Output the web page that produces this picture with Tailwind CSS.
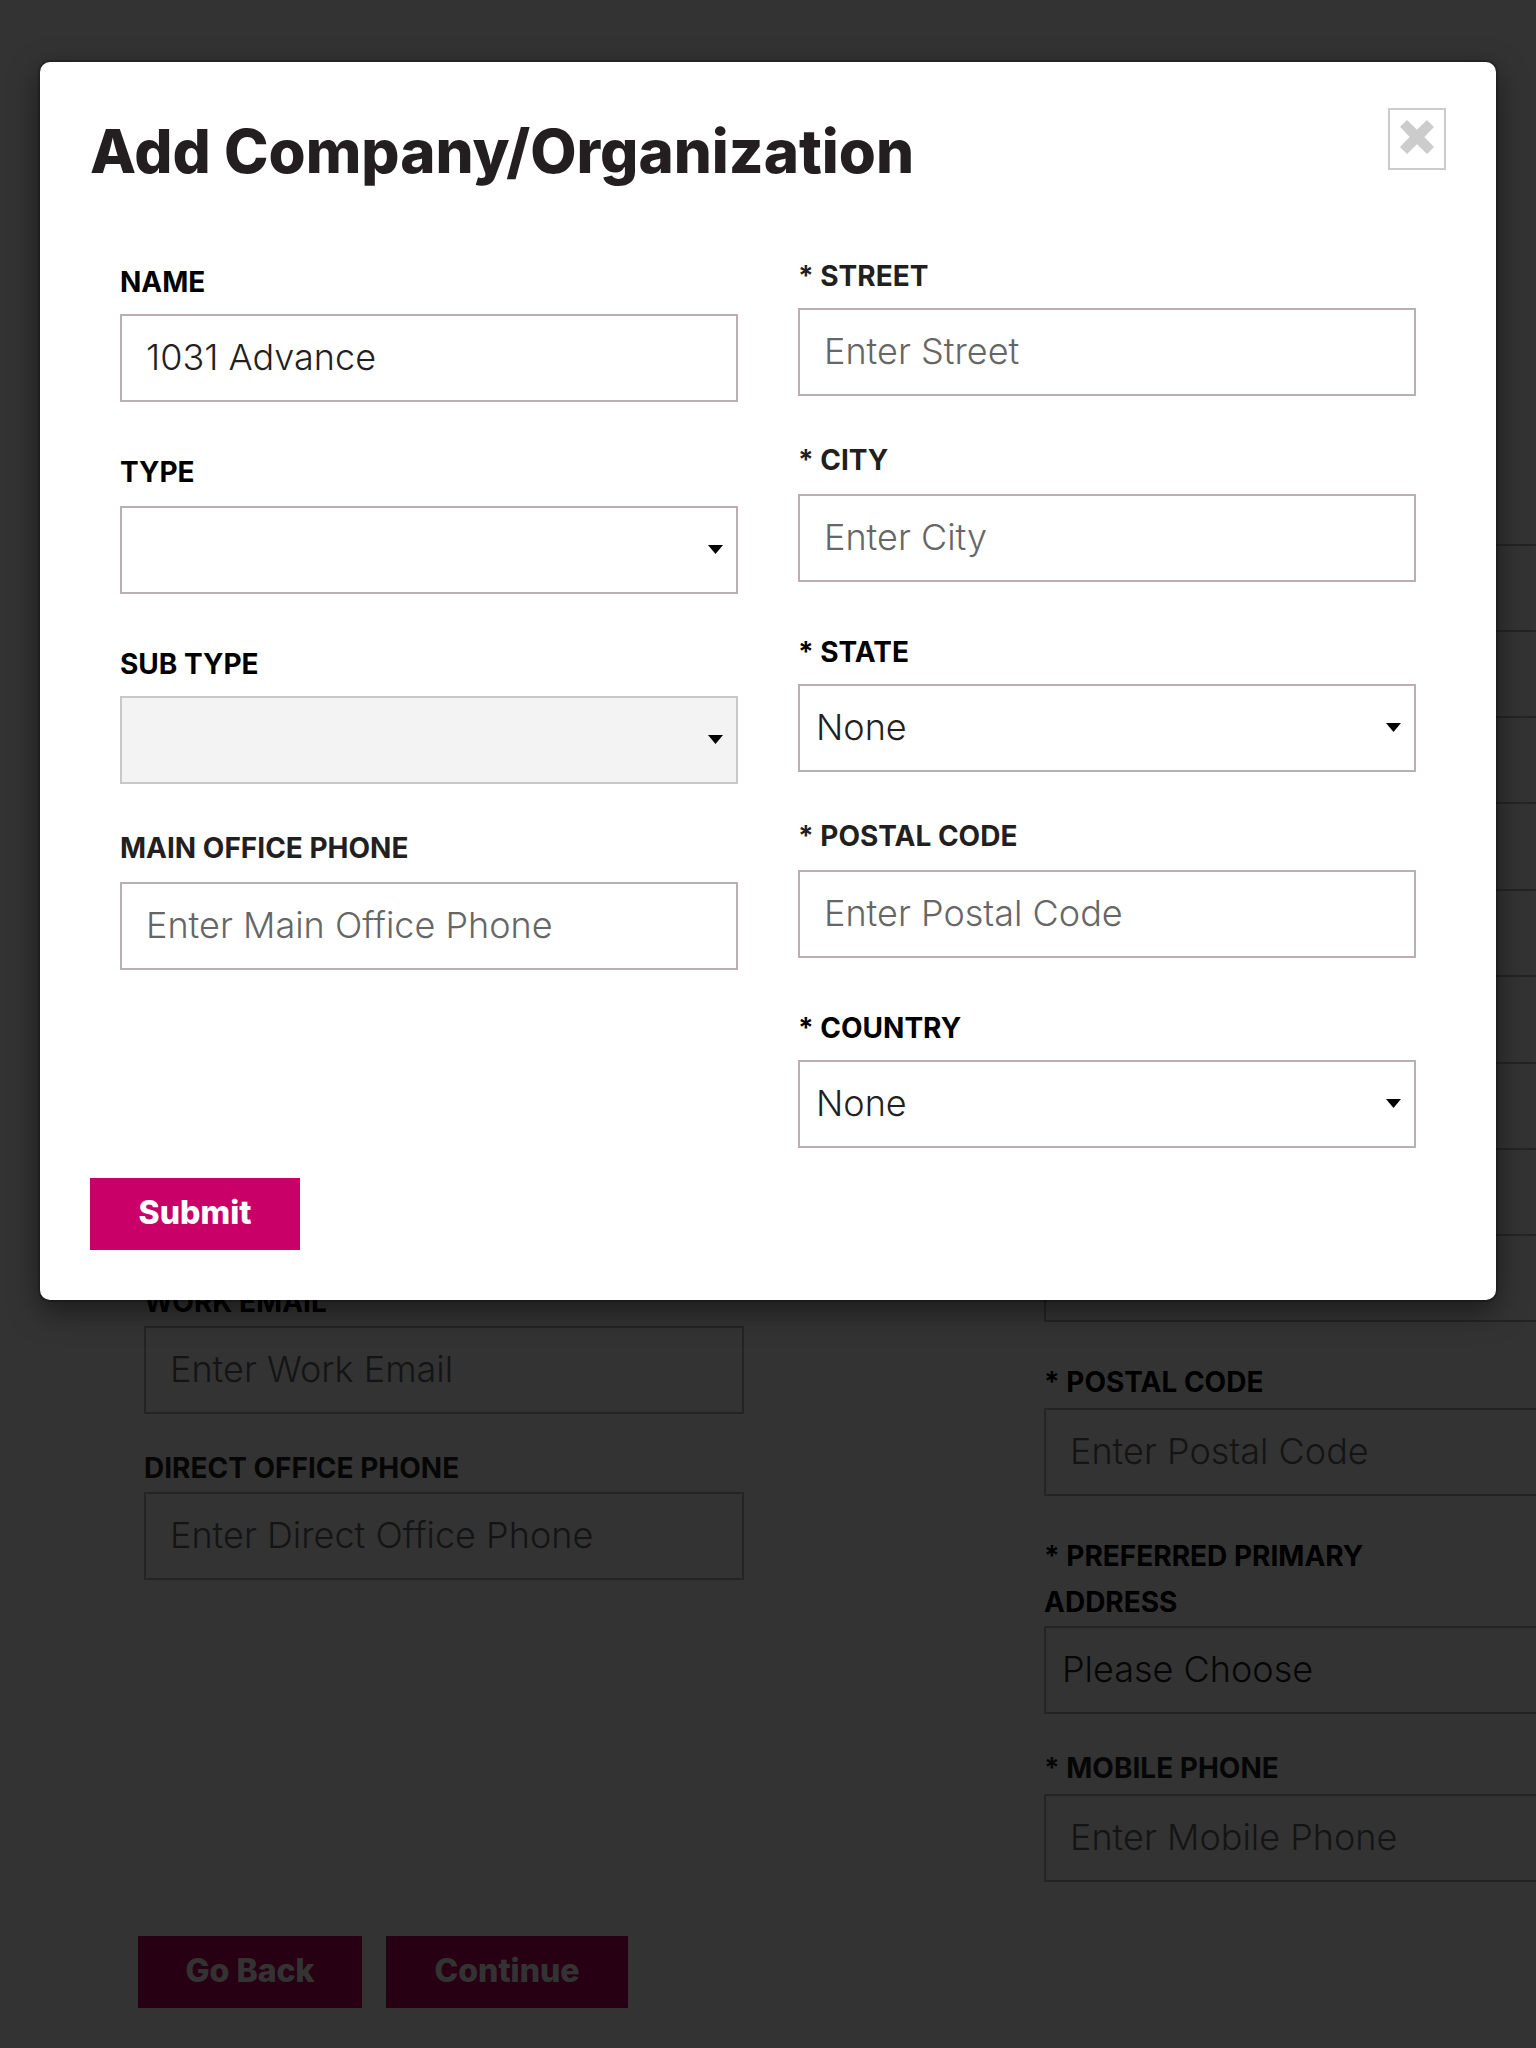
<!DOCTYPE html>
<html lang="en">
<head>
<meta charset="utf-8">
<meta name="viewport" content="width=device-width, initial-scale=1">
<title>Add Company/Organization</title>
<script src="https://cdn.jsdelivr.net/npm/@tailwindcss/browser@4"></script>
</head>
<body class="relative min-h-screen overflow-x-hidden bg-white font-['Inter',sans-serif] text-[#231f20]">

<!-- Contact form behind the dialog -->
<main class="min-h-screen overflow-hidden pt-[496px] pl-[144px] pb-10">
  <form>
    <div class="flex items-start gap-[300px]">
      <div class="w-[600px] shrink-0 pt-[783px]">
        <label for="work-email" class="block text-[28px] leading-[46px] mb-px font-bold text-black">WORK EMAIL</label>
        <input id="work-email" type="email" placeholder="Enter Work Email" class="block h-[88px] w-full border-2 border-[#bbaeb0] px-6 pb-0.5 text-[36px] font-light placeholder:text-[#666]">
        <label for="direct-phone" class="mt-[31px] block text-[28px] leading-[46px] mb-px font-bold">DIRECT OFFICE PHONE</label>
        <input id="direct-phone" type="tel" placeholder="Enter Direct Office Phone" class="block h-[88px] w-full border-2 border-[#bbaeb0] px-6 pb-0.5 text-[36px] font-light placeholder:text-[#666]">
      </div>
      <div class="w-[600px] shrink-0">
        <label for="bg-title" class="block text-[28px] leading-[46px] mb-0.5 font-bold text-black">TITLE</label>
        <input id="bg-title" type="text" class="block h-[88px] w-full border-2 border-[#bbaeb0] px-6 pb-0.5 text-[36px] font-light">
        <label for="bg-country" class="mt-9 block text-[28px] leading-[46px] mb-0.5 font-bold text-black">* COUNTRY</label>
        <input id="bg-country" type="text" class="block h-[88px] w-full border-2 border-[#bbaeb0] px-6 pb-0.5 text-[36px] font-light">
        <label for="bg-street" class="mt-[37px] block text-[28px] leading-[46px] mb-0.5 font-bold text-black">* STREET</label>
        <input id="bg-street" type="text" class="block h-[88px] w-full border-2 border-[#bbaeb0] px-6 pb-0.5 text-[36px] font-light">
        <label for="bg-city" class="mt-[37px] block text-[28px] leading-[46px] mb-0.5 font-bold text-black">* CITY</label>
        <input id="bg-city" type="text" class="block h-[88px] w-full border-2 border-[#bbaeb0] px-6 pb-0.5 text-[36px] font-light">
        <label for="bg-state" class="mt-9 block text-[28px] leading-[46px] mb-0.5 font-bold text-black">* STATE</label>
        <input id="bg-state" type="text" class="block h-[88px] w-full border-2 border-[#bbaeb0] px-6 pb-0.5 text-[36px] font-light">
        <label for="bg-postal" class="mt-[37px] block text-[28px] leading-[46px] mb-[3px] font-bold text-black">* POSTAL CODE</label>
        <input id="bg-postal" type="text" placeholder="Enter Postal Code" class="block h-[88px] w-full border-2 border-[#bbaeb0] px-6 pb-0.5 text-[36px] font-light placeholder:text-[#666]">
        <label for="bg-preferred" class="mt-[37px] block text-[28px] leading-[46px] mb-px font-bold text-black">* PREFERRED PRIMARY<br>ADDRESS</label>
        <select id="bg-preferred" class="block h-[88px] w-full appearance-none border-2 border-[#bbaeb0] px-4 pb-0.5 text-[36px] font-light"><option>Please Choose</option></select>
        <label for="bg-mobile" class="mt-[31px] block text-[28px] leading-[46px] mb-[3px] font-bold">* MOBILE PHONE</label>
        <input id="bg-mobile" type="tel" placeholder="Enter Mobile Phone" class="block h-[88px] w-full border-2 border-[#bbaeb0] px-6 pb-0.5 text-[36px] font-light placeholder:text-[#666]">
      </div>
    </div>
    <div class="-ml-1.5 mt-[54px] flex gap-6">
      <button type="button" class="h-[72px] w-[224px] bg-[#c90067] pb-0.5 text-[32px] font-extrabold text-white">Go Back</button>
      <button type="button" class="h-[72px] w-[242px] bg-[#c90067] pb-0.5 text-[32px] font-extrabold text-white">Continue</button>
    </div>
  </form>
</main>

<!-- Dialog -->
<div class="absolute inset-0 bg-black/80 px-10 pt-[62px]">
  <section role="dialog" aria-modal="true" aria-labelledby="dialog-title" class="rounded-[10px] bg-white px-[50px] pt-[46px] pb-[50px] shadow-[0_0_0_2px_rgba(0,0,0,0.2),0_10px_30px_rgba(0,0,0,0.5)]">
    <header class="flex items-start justify-between">
      <h1 id="dialog-title" class="text-[60px] leading-[86px] font-extrabold">Add Company/Organization</h1>
      <button type="button" aria-label="Close" class="flex h-[62px] w-[58px] justify-center border-2 border-[#ccc] pt-[10px]">
        <svg class="size-[34px]" viewBox="0 0 102 102" fill="#ccc" aria-hidden="true"><path d="M0 20 21 0 51 29 81 0 102 21 73 51 102 81 81 102 51 73 21 102 0 81 29 51Z"/></svg>
      </button>
    </header>

    <form>
      <div class="grid grid-cols-2 items-start gap-x-[60px] px-[30px] pt-[59px]">
        <div class="pt-1.5">
          <label for="name" class="mb-[9px] block text-[28px] leading-[46px] font-bold text-black">NAME</label>
          <input id="name" type="text" value="1031 Advance" class="block h-[88px] w-full border-2 border-[#bbaeb0] px-6 pb-0.5 text-[36px] font-light">

          <label for="type" class="mt-[47px] mb-[11px] block text-[28px] leading-[46px] font-bold text-black">TYPE</label>
          <div class="relative">
            <select id="type" class="block h-[88px] w-full appearance-none border-2 border-[#bbaeb0] bg-white px-4 pb-0.5 text-[36px] font-light"><option></option></select>
            <svg class="pointer-events-none absolute top-[39px] right-[15px] h-[9px] w-[15px]" viewBox="0 0 15 9" aria-hidden="true"><path d="M0 0H15L7.500 9Z"/></svg>
          </div>

          <label for="sub-type" class="mt-[47px] mb-[9px] block text-[28px] leading-[46px] font-bold text-black">SUB TYPE</label>
          <div class="relative">
            <select id="sub-type" disabled class="block h-[88px] w-full appearance-none border-2 border-[#c8c8c8] bg-[#f3f3f3] px-4 pb-0.5 text-[36px] font-light opacity-100"><option></option></select>
            <svg class="pointer-events-none absolute top-[39px] right-[15px] h-[9px] w-[15px]" viewBox="0 0 15 9" aria-hidden="true"><path d="M0 0H15L7.500 9Z"/></svg>
          </div>

          <label for="office-phone" class="mt-[41px] mb-[11px] block text-[28px] leading-[46px] font-bold">MAIN OFFICE PHONE</label>
          <input id="office-phone" type="tel" placeholder="Enter Main Office Phone" class="block h-[88px] w-full border-2 border-[#bbaeb0] px-6 pb-0.5 text-[36px] font-light placeholder:text-[#666]">
        </div>

        <div>
          <label for="street" class="mb-[9px] block text-[28px] leading-[46px] font-bold">* STREET</label>
          <input id="street" type="text" placeholder="Enter Street" class="block h-[88px] w-full border-2 border-[#bbaeb0] px-6 pb-0.5 text-[36px] font-light placeholder:text-[#666]">

          <label for="city" class="mt-[41px] mb-[11px] block text-[28px] leading-[46px] font-bold">* CITY</label>
          <input id="city" type="text" placeholder="Enter City" class="block h-[88px] w-full border-2 border-[#bbaeb0] px-6 pb-0.5 text-[36px] font-light placeholder:text-[#666]">

          <label for="state" class="mt-[47px] mb-[9px] block text-[28px] leading-[46px] font-bold text-black">* STATE</label>
          <div class="relative">
            <select id="state" class="block h-[88px] w-full appearance-none border-2 border-[#bbaeb0] bg-white px-4 pb-0.5 text-[36px] font-light"><option>None</option></select>
            <svg class="pointer-events-none absolute top-[39px] right-[15px] h-[9px] w-[15px]" viewBox="0 0 15 9" aria-hidden="true"><path d="M0 0H15L7.500 9Z"/></svg>
          </div>

          <label for="postal" class="mt-[41px] mb-[11px] block text-[28px] leading-[46px] font-bold">* POSTAL CODE</label>
          <input id="postal" type="text" placeholder="Enter Postal Code" class="block h-[88px] w-full border-2 border-[#bbaeb0] px-6 pb-0.5 text-[36px] font-light placeholder:text-[#666]">

          <label for="country" class="mt-[47px] mb-[9px] block text-[28px] leading-[46px] font-bold text-black">* COUNTRY</label>
          <div class="relative">
            <select id="country" class="block h-[88px] w-full appearance-none border-2 border-[#bbaeb0] bg-white px-4 pb-0.5 text-[36px] font-light"><option>None</option></select>
            <svg class="pointer-events-none absolute top-[39px] right-[15px] h-[9px] w-[15px]" viewBox="0 0 15 9" aria-hidden="true"><path d="M0 0H15L7.500 9Z"/></svg>
          </div>
        </div>
      </div>
      <button type="submit" class="mt-[30px] block h-[72px] w-[210px] bg-[#c90067] pb-0.5 text-[32px] font-extrabold text-white">Submit</button>
    </form>
  </section>
</div>
</body>
</html>
